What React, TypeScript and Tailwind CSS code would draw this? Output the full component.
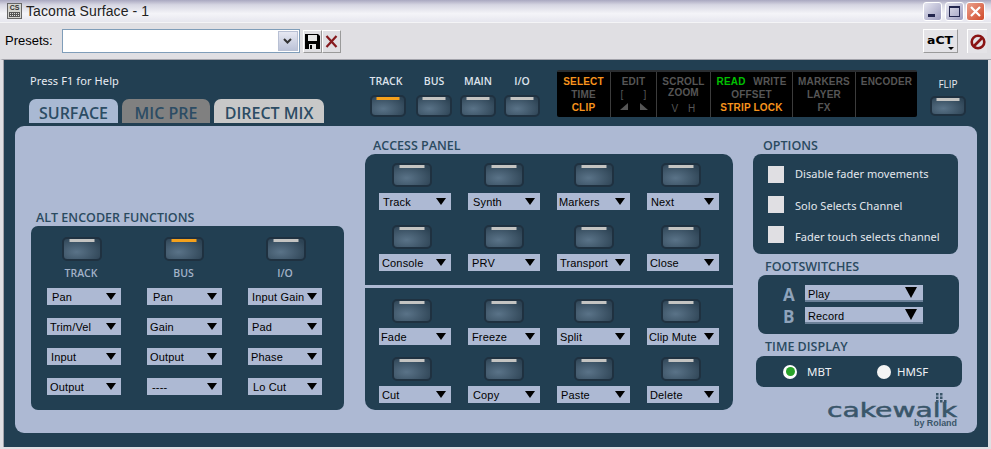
import React from 'react';

const uiFont = "font-['Noto_Sans',sans-serif]";
const dropFont = "font-['Liberation_Sans',sans-serif]";
const headFont = "font-['Open_Sans',sans-serif]";

const HwButton: React.FC<{ lit?: boolean; small?: boolean; className?: string }> = ({ lit, small, className = '' }) => (
  <div
    className={`relative shrink-0 rounded-[5px] border-2 border-[#1f3140] bg-[radial-gradient(ellipse_at_35%_65%,#5a7388,#2d4354_85%)] ${small ? 'w-[36px] h-[22px]' : 'w-[40px] h-[24px]'} ${className}`}
  >
    <div
      className={`absolute top-0 left-1/2 -translate-x-1/2 h-[3px] ${small ? 'w-[23px]' : 'w-[25px]'} ${lit ? 'bg-[#f5a11c]' : 'bg-[#c4c4c2]'}`}
    />
  </div>
);

const Arrow: React.FC<{ big?: boolean }> = ({ big }) => (
  <svg width={big ? 12 : 10} height={big ? 11 : 7} viewBox="0 0 10 7" preserveAspectRatio="none" className="shrink-0">
    <polygon points="0,0 10,0 5,7" fill="#000" />
  </svg>
);

const Drop: React.FC<{ label: string; pad: string; width: string }> = ({ label, pad, width }) => (
  <div className={`flex items-center justify-between h-[17px] bg-[#adb9d3] pr-[5px] ${pad} ${width} ${dropFont} text-[11px] tracking-[0.15px] leading-none text-black`}>
    <span className="whitespace-nowrap pt-[2px]">{label}</span>
    <Arrow />
  </div>
);

const Heading: React.FC<{ children: React.ReactNode; className?: string }> = ({ children, className = '' }) => (
  <div className={`h-[16px] ${headFont} font-semibold text-[12.5px] leading-[18px] text-[#2a4a60] whitespace-nowrap ${className}`}>{children}</div>
);

const altColumns = [
  {
    name: 'TRACK',
    lit: false,
    col: 'w-[100px]',
    btn: 'ml-[15px]',
    lab: 'w-[68px]',
    width: 'w-[74px]',
    items: [['Pan', 'pl-[5px]'], ['Trim/Vel', 'pl-[3px]'], ['Input', 'pl-[4px]'], ['Output', 'pl-[3px]']],
  },
  {
    name: 'BUS',
    lit: true,
    col: 'w-[101px]',
    btn: 'ml-[17px]',
    lab: 'w-[73px]',
    width: 'w-[75px]',
    items: [['Pan', 'pl-[6px]'], ['Gain', 'pl-[3px]'], ['Output', 'pl-[3px]'], ['----', 'pl-[5px]']],
  },
  {
    name: 'I/O',
    lit: false,
    col: 'w-[74px]',
    btn: 'ml-[18px]',
    lab: 'w-[74px]',
    width: 'w-[74px]',
    items: [['Input Gain', 'pl-[4px]'], ['Pad', 'pl-[4px]'], ['Phase', 'pl-[3px]'], ['Lo Cut', 'pl-[5px]']],
  },
];

const accessOffsets = ['ml-[13px]', 'ml-[16px]', 'ml-[17px]', 'ml-[14px]'];
const accessWidths = ['w-[72px]', 'w-[72px]', 'w-[73px]', 'w-[72px]'];

const accessTop = [
  [['Track', 'pl-[4px]'], ['Synth', 'pl-[5px]'], ['Markers', 'pl-[2px]'], ['Next', 'pl-[4px]']],
  [['Console', 'pl-[3px]'], ['PRV', 'pl-[4px]'], ['Transport', 'pl-[3px]'], ['Close', 'pl-[3px]']],
];
const accessBottom = [
  [['Fade', 'pl-[2px]'], ['Freeze', 'pl-[4px]'], ['Split', 'pl-[3px]'], ['Clip Mute', 'pl-[2px]']],
  [['Cut', 'pl-[3px]'], ['Copy', 'pl-[5px]'], ['Paste', 'pl-[4px]'], ['Delete', 'pl-[3px]']],
];

const options = [
  ['Disable fader movements', '-mt-[2px]'],
  ['Solo Selects Channel', 'mt-[1px]'],
  ['Fader touch selects channel', 'mt-[4px]'],
];

const AccessRow: React.FC<{ items: string[][]; gap: string }> = ({ items, gap }) => (
  <div className="grid grid-cols-[89px_89px_90px_72px]">
    {items.map(([label, pad], i) => (
      <div key={label} className={`flex flex-col ${gap}`}>
        <HwButton className={accessOffsets[i]} />
        <Drop label={label} pad={pad} width={accessWidths[i]} />
      </div>
    ))}
  </div>
);

const DisplayCell: React.FC<{ width: string; last?: boolean; children: React.ReactNode }> = ({ width, last, children }) => (
  <div className={`${width} flex flex-col items-center pt-[3px] ${last ? '' : 'border-r border-[#3c3c3c]'}`}>{children}</div>
);

const off = 'text-[#565656]';
const on = 'text-[#f7941d]';

const WinButton: React.FC<{ close?: boolean; children: React.ReactNode }> = ({ close, children }) => (
  <div
    className={`w-[19px] h-[19px] rounded-[3px] border border-white flex items-center justify-center ${close ? 'bg-[linear-gradient(135deg,#eba08c,#d0492a)]' : 'bg-[linear-gradient(135deg,#e6e6f0,#9d9dc0)]'}`}
  >
    {children}
  </div>
);

const App: React.FC = () => {
  return (
    <div className={`w-[991px] h-[449px] overflow-hidden flex flex-col bg-[#e0dfe3] ${uiFont}`}>
      {/* title bar */}
      <div className="h-[23px] shrink-0 flex items-center pl-[7px] pr-[6px] bg-[linear-gradient(#a9a8c0,#d6d6e2_22%,#f4f4f8_62%,#e6e6ee)] border-b border-[#f4f4f6]">
        <svg width="15" height="16" viewBox="0 0 15 16" className="shrink-0">
          <rect x="0.5" y="0.5" width="14" height="15" fill="#d4d4d0" stroke="#666" />
          <text x="7.5" y="7" textAnchor="middle" fontSize="7" fontWeight="700" fontFamily="Liberation Sans" fill="#333">CS</text>
          <rect x="2" y="9" width="11" height="5" fill="#555" />
          <path d="M3 10.5h9M3 12.5h9" stroke="#ddd" strokeDasharray="1 1" />
        </svg>
        <span className="ml-[4px] text-[14px] tracking-[0.1px] text-[#222] font-['Liberation_Sans',sans-serif] leading-none">Tacoma Surface - 1</span>
        <div className="ml-auto flex gap-[2.5px]">
          <WinButton>
            <div className="w-[7px] h-[3px] bg-[#23264e] mt-[9px] -ml-[3px]" />
          </WinButton>
          <WinButton>
            <div className="w-[11px] h-[11px] border border-[#23264e] border-t-2" />
          </WinButton>
          <WinButton close>
            <svg width="13" height="13" viewBox="0 0 13 13">
              <path d="M2 2l9 9M11 2l-9 9" stroke="#fff" strokeWidth="2.2" />
            </svg>
          </WinButton>
        </div>
      </div>

      {/* toolbar */}
      <div className="h-[37px] shrink-0 flex items-center pl-[5px] pr-[4px] border-b border-[#a3a3ab] border-l-[3px] border-l-[#e0dfe3]">
        <span className="text-[13px] text-black -ml-[3px] w-[58px] font-['Liberation_Sans',sans-serif]">Presets:</span>
        <div className="w-[240px] h-[24px] flex justify-end items-center bg-white border border-[#7f9db9] pr-px">
          <div className="w-[20px] h-[20px] bg-[linear-gradient(#e6e8f2,#bcc3d8)] border border-[#b8c0d4] flex items-center justify-center">
            <svg width="9" height="6" viewBox="0 0 9 6">
              <path d="M1 1l3.5 3.5L8 1" fill="none" stroke="#333" strokeWidth="2" />
            </svg>
          </div>
        </div>
        <div className="ml-[3px] w-[19px] h-[23px] flex items-center justify-center bg-[#e0dfe3] border-r border-b border-[#9a9a9a] border-t border-l border-t-white border-l-white">
          <svg width="15" height="15" viewBox="0 0 15 15">
            <path d="M0 0h13l2 2v13H0z" fill="#000" />
            <rect x="3" y="1" width="9" height="6" fill="#e6e6e6" />
            <rect x="4" y="10" width="7" height="5" fill="#e6e6e6" />
            <rect x="5" y="11" width="2" height="4" fill="#000" />
          </svg>
        </div>
        <div className="w-[19px] h-[23px] flex items-center justify-center bg-[#e0dfe3] border-r border-b border-[#9a9a9a] border-t border-l border-t-white border-l-white">
          <svg width="13" height="13" viewBox="0 0 13 13">
            <path d="M1.5 1l10 11M11.5 1l-10 11" stroke="#861a1e" strokeWidth="2.2" />
          </svg>
        </div>
        <div className="ml-[582px] relative w-[36px] h-[24px] bg-[#e4e3e7] border-r border-b border-[#9a9a9a] border-t border-l border-t-white border-l-white flex justify-center">
          <svg width="30" height="18" viewBox="0 0 30 18">
            <text x="2" y="14" textLength="26" lengthAdjust="spacingAndGlyphs" fontSize="11" fontWeight="700" fontFamily="DejaVu Sans" fill="#000">aCT</text>
          </svg>
          <div className="absolute right-[3px] bottom-[2px] w-0 h-0 border-l-[3px] border-r-[3px] border-t-[3px] border-l-transparent border-r-transparent border-t-black" />
        </div>
        <div className="ml-[9px] w-[20px] h-[24px] bg-[#e4e3e7] border-t border-l border-t-white border-l-white flex items-center justify-start pl-[2px] overflow-hidden">
          <svg width="16" height="16" viewBox="0 0 16 16" className="shrink-0">
            <circle cx="8" cy="8" r="6.3" fill="none" stroke="#8a1414" strokeWidth="2.6" />
            <path d="M3.5 12.5l9-9" stroke="#8a1414" strokeWidth="2.6" />
          </svg>
        </div>
      </div>

      {/* surface */}
      <div className="flex-1 ml-[3px] mr-[3px] mb-[2px] bg-[#223f52] border-l border-[#a3a3ab] flex flex-col">
        {/* top strip */}
        <div className="h-[66px] shrink-0 flex">
          <div className="w-[366px] shrink-0 pl-[25px] flex flex-col">
            <div className="mt-[14px] ml-px h-[13px] text-[11px] tracking-[0.1px] leading-[13px] text-[#e8ecf2]">Press F1 for Help</div>
            <div className={`mt-[12px] flex gap-[4px] ${headFont} font-semibold text-[16px] text-[#2c4c64]`}>
              <div className="w-[89px] h-[24px] pt-[3px] rounded-t-[7px] bg-[#a9b9d3] flex justify-center items-center leading-none">SURFACE</div>
              <div className="w-[88px] h-[24px] pt-[3px] rounded-t-[7px] bg-[#808080] flex justify-center items-center leading-none">MIC PRE</div>
              <div className="w-[110px] h-[24px] pt-[3px] rounded-t-[7px] bg-[#c8c8c8] flex justify-center items-center leading-none">DIRECT MIX</div>
            </div>
          </div>

          <div className="flex pt-[14px] w-[187px] shrink-0">
            {[
              ['TRACK', true, 'w-[46px]', '-ml-[2px]'],
              ['BUS', false, 'w-[44px]', ''],
              ['MAIN', false, 'w-[44px]', ''],
              ['I/O', false, 'w-[36px]', ''],
            ].map(([name, lit, w, shift]) => (
              <div key={name as string} className={`${w as string} flex flex-col`}>
                <div className={`h-[14px] w-[36px] flex justify-center ${shift as string} ${headFont} font-semibold text-[10.5px] leading-[14px] text-[#dde3ec]`}>{name as string}</div>
                <HwButton small lit={lit as boolean} className="mt-[7px]" />
              </div>
            ))}
          </div>

          {/* status display */}
          <div className="mt-[10px] w-[360px] h-[47px] shrink-0 flex bg-black border-t-2 border-[#2a2d30] rounded-[2px] font-['Liberation_Sans',sans-serif] font-bold text-[10px] leading-[13px] tracking-[0.2px]">
            <DisplayCell width="w-[54px]">
              <span className={on}>SELECT</span>
              <span className={off}>TIME</span>
              <span className={on}>CLIP</span>
            </DisplayCell>
            <DisplayCell width="w-[46px]">
              <span className={off}>EDIT</span>
              <div className={`w-[26px] flex justify-between font-normal ${off}`}>
                <span>[</span>
                <span>]</span>
              </div>
              <div className="w-[28px] mt-[2px] flex justify-between">
                <svg width="8" height="7" viewBox="0 0 8 7"><polygon points="8,0 8,7 0,7" fill="#565656" /></svg>
                <svg width="8" height="7" viewBox="0 0 8 7"><polygon points="0,0 8,7 0,7" fill="#565656" /></svg>
              </div>
            </DisplayCell>
            <DisplayCell width="w-[54px]">
              <span className={`${off} leading-[11px] mt-px`}>SCROLL</span>
              <span className={`${off} leading-[11px]`}>ZOOM</span>
              <div className={`w-[24px] mt-[4px] flex justify-between font-normal text-[10px] ${off}`}>
                <span>V</span>
                <span>H</span>
              </div>
            </DisplayCell>
            <DisplayCell width="w-[82px]">
              <div className="flex w-[70px] justify-between">
                <span className="text-[#00c000]">READ</span>
                <span className={off}>WRITE</span>
              </div>
              <span className={off}>OFFSET</span>
              <span className={on}>STRIP LOCK</span>
            </DisplayCell>
            <DisplayCell width="w-[63px]">
              <span className={off}>MARKERS</span>
              <span className={off}>LAYER</span>
              <span className={off}>FX</span>
            </DisplayCell>
            <DisplayCell width="w-[61px]" last>
              <span className={off}>ENCODER</span>
            </DisplayCell>
          </div>

          <div className="ml-[13px] pt-[18px] flex flex-col items-center w-[36px]">
            <div className={`h-[13px] ${headFont} text-[10px] leading-[13px] text-[#e6eaf0]`}>FLIP</div>
            <HwButton small className="mt-[5px] !h-[20px]" />
          </div>
        </div>

        {/* main light panel */}
        <div className="ml-[11px] w-[962px] h-[307px] shrink-0 rounded-[9px] bg-[#adb9d3] flex">
          {/* alt encoder */}
          <div className="ml-[16px] w-[313px] pt-[83px] shrink-0">
            <Heading className="ml-[5px] mb-px">ALT ENCODER FUNCTIONS</Heading>
            <div className="h-[184px] rounded-[7px] bg-[#223f52] pt-[11px] pl-[16px] flex">
              {altColumns.map((c) => (
                <div key={c.name} className={`${c.col} flex flex-col`}>
                  <HwButton lit={c.lit} className={c.btn} />
                  <div className={`h-[14px] mt-[5px] mb-[8px] ${c.lab} flex justify-center ${headFont} font-semibold text-[10.5px] leading-[14px] text-[#a3b2c8]`}>
                    {c.name}
                  </div>
                  <div className="flex flex-col gap-[13px]">
                    {c.items.map(([label, pad]) => (
                      <Drop key={label} label={label} pad={pad} width={c.width} />
                    ))}
                  </div>
                </div>
              ))}
            </div>
          </div>

          {/* access panel */}
          <div className="ml-[21px] w-[368px] pt-[11px] shrink-0">
            <Heading className="ml-[8px] mb-px">ACCESS PANEL</Heading>
            <div className="h-[131px] rounded-t-[10px] bg-[#223f52] pt-[9px] pl-[14px] flex flex-col gap-[15px]">
              <AccessRow items={accessTop[0]} gap="gap-[6px]" />
              <AccessRow items={accessTop[1]} gap="gap-[5px]" />
            </div>
            <div className="mt-[3px] h-[122px] rounded-b-[10px] bg-[#223f52] pt-[11px] pl-[14px] flex flex-col gap-[12px]">
              <AccessRow items={accessBottom[0]} gap="gap-[5px]" />
              <AccessRow items={accessBottom[1]} gap="gap-[5px]" />
            </div>
          </div>

          {/* right column */}
          <div className="ml-[20px] w-[209px] pt-[11px] shrink-0">
            <Heading className="ml-[10px] mb-px">OPTIONS</Heading>
            <div className="w-[205px] h-[100px] rounded-[8px] bg-[#223f52] pt-[12px] pl-[15px] flex flex-col gap-[13px]">
              {options.map(([t, nudge]) => (
                <div key={t} className="flex items-center h-[17px]">
                  <div className="w-[16px] h-[17px] bg-[#e0dfe3]" />
                  <span className={`ml-[11px] ${nudge} text-[11px] tracking-[0.05px] leading-none text-[#e4e8ee] whitespace-nowrap`}>{t}</span>
                </div>
              ))}
            </div>

            <Heading className="ml-[12px] mt-[4px] mb-px">FOOTSWITCHES</Heading>
            <div className="ml-[5px] w-[201px] h-[59px] rounded-[8px] bg-[#223f52] pt-[10px] pl-[25px] flex flex-col gap-[5px]">
              {[
                ['A', 'Play'],
                ['B', 'Record'],
              ].map(([k, v]) => (
                <div key={k} className="flex items-center h-[17px]">
                  <span className={`w-[22px] pt-[2px] ${headFont} font-bold text-[17px] leading-none text-[#8ea3bb]`}>{k}</span>
                  <div className={`w-[118px] h-[17px] flex items-center justify-between bg-[#adb9d3] border-b-2 border-[#6b8098] pl-[3px] pr-[6px] ${dropFont} text-[11px] tracking-[0.15px] leading-none text-black`}>
                    <span className="pt-[3px]">{v}</span>
                    <Arrow big />
                  </div>
                </div>
              ))}
            </div>

            <Heading className="ml-[12px] mt-[4px] mb-[2px]">TIME DISPLAY</Heading>
            <div className="ml-[3px] w-[206px] h-[31px] rounded-[8px] bg-[#223f52] flex items-center pl-[27px] text-[11.5px] leading-none text-[#eef1f5]">
              <div className="w-[14px] h-[14px] rounded-full bg-white flex items-center justify-center">
                <div className="w-[9px] h-[9px] rounded-full bg-[#2aa32a]" />
              </div>
              <span className="ml-[10px] w-[70px]">MBT</span>
              <div className="w-[14px] h-[14px] rounded-full bg-[#f4f4f4]" />
              <span className="ml-[6px]">HMSF</span>
            </div>

            {/* cakewalk logo */}
            <div className="mt-[6px] flex justify-end pr-[4px]">
              <svg width="132" height="35" viewBox="0 0 132 35">
                <text x="1" y="24" textLength="130" lengthAdjust="spacingAndGlyphs" fontSize="20" fontFamily="DejaVu Sans" stroke="#3a566a" strokeWidth="0.5" fill="#3a566a">cakewalk</text>
                <g fill="#3a566a">
                  <rect x="110" y="0" width="2.5" height="2.5" />
                  <rect x="114" y="0" width="2.5" height="2.5" />
                  <rect x="110" y="3.5" width="2.5" height="2.5" />
                  <rect x="114" y="3.5" width="2.5" height="2.5" />
                  <rect x="110" y="7" width="2.5" height="2.5" />
                  <rect x="114" y="7" width="2.5" height="2.5" />
                  <rect x="118" y="7" width="2.5" height="2.5" />
                </g>
                <text x="88" y="33" textLength="43" lengthAdjust="spacingAndGlyphs" fontSize="8.5" fontWeight="700" fontFamily="Liberation Sans" fill="#3a566a">by Roland</text>
              </svg>
            </div>
          </div>
        </div>
      </div>
    </div>
  );
};

export default App;
